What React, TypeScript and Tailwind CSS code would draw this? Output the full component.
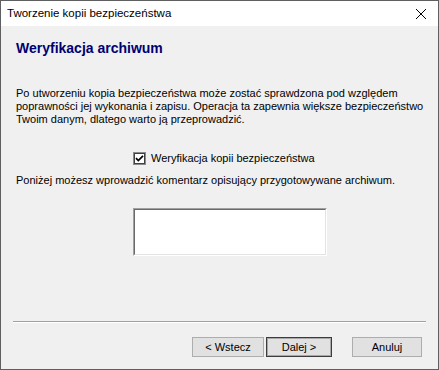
import React from "react";

function Btn({ label, def, w }: { label: string; def?: boolean; w: string }) {
  return (
    <div
      className={
        "h-[20px] flex items-center justify-center bg-[#e1e1e1] text-[11px] text-black " +
        w +
        (def
          ? " border border-[#3c3c3c] shadow-[inset_0_0_0_1px_#a8a8a8]"
          : " border border-[#adadad]")
      }
    >
      {label}
    </div>
  );
}

export default function App() {
  return (
    <div
      className="w-[439px] h-[370px] border border-[#5f5f5f] bg-[#f0f0f0] flex flex-col"
      style={{ fontFamily: '"Liberation Sans", Arial, sans-serif' }}
    >
      <div className="h-[25px] bg-white flex items-center justify-between pl-[6px] pr-[10px] shrink-0">
        <span className="text-[11.5px] text-black leading-none">Tworzenie kopii bezpieczeństwa</span>
        <svg width="12" height="12" viewBox="0 0 12 12" className="mr-[1px]">
          <path d="M1 1 L11 11 M11 1 L1 11" stroke="#000" strokeWidth="1" fill="none" />
        </svg>
      </div>

      <div className="flex-1 flex flex-col px-[15px]">
        <div className="mt-[14px] h-[16px] leading-[16px] text-[14px] font-bold text-[#000070]">
          Weryfikacja archiwum
        </div>

        <div className="mt-[31px] text-[11px] leading-[13px] text-black whitespace-nowrap">
          Po utworzeniu kopia bezpieczeństwa może zostać sprawdzona pod względem
          <br />
          poprawności jej wykonania i zapisu. Operacja ta zapewnia większe bezpieczeństwo
          <br />
          Twoim danym, dlatego warto ją przeprowadzić.
        </div>

        <div className="mt-[26px] ml-[117px] flex items-center h-[13px]">
          <svg width="13" height="13" viewBox="0 0 13 13" className="shrink-0">
            <rect x="0.5" y="0.5" width="12" height="12" fill="#fff" stroke="#8a8a8a" />
            <rect x="1.5" y="1.5" width="10" height="10" fill="#fff" stroke="#404040" />
            <path d="M3 6.2 L5.3 8.6 L10 3.8" stroke="#000" strokeWidth="1.7" fill="none" />
          </svg>
          <span className="ml-[5px] text-[11px] leading-[13px] text-black whitespace-nowrap">
            Weryfikacja kopii bezpieczeństwa
          </span>
        </div>

        <div className="mt-[9px] text-[11px] leading-[13px] text-black whitespace-nowrap">
          Poniżej możesz wprowadzić komentarz opisujący przygotowywane archiwum.
        </div>

        <div className="mt-[21px] ml-[117px] w-[194px] h-[48px] border-t border-l border-[#a0a0a0] border-b border-r border-b-white border-r-white">
          <div className="w-full h-full bg-white border-t border-l border-[#696969] border-b border-r border-b-[#e3e3e3] border-r-[#e3e3e3]" />
        </div>
      </div>

      <div className="mx-[12px] border-t border-[#a0a0a0] border-b border-b-white shrink-0" />

      <div className="h-[46px] shrink-0 flex items-start pt-[14px] pl-[191px]">
        <Btn label="< Wstecz" w="w-[72px]" />
        <div className="ml-[2px]">
          <Btn label="Dalej >" w="w-[66px]" def />
        </div>
        <div className="ml-[20px]">
          <Btn label="Anuluj" w="w-[70px]" />
        </div>
      </div>
    </div>
  );
}
